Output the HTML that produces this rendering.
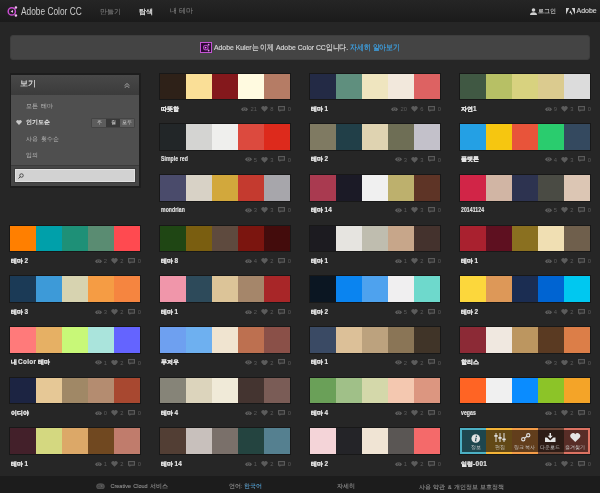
<!DOCTYPE html>
<html><head><meta charset="utf-8">
<style>
*{margin:0;padding:0;box-sizing:border-box}
.root{position:absolute;left:0;top:0;width:600px;height:493px;will-change:transform}
html,body{width:600px;height:493px;overflow:hidden;background:#262626;font-family:"Liberation Sans",sans-serif}
.hdr{position:absolute;left:0;top:0;width:600px;height:22px;background:linear-gradient(#252525,#1b1b1b)}
.logo{position:absolute;left:6px;top:5px}
.brand{position:absolute;left:21px;top:5.8px;font-size:10.3px;color:#cacaca;transform:scaleX(0.81);transform-origin:0 0;white-space:nowrap}
.nav{position:absolute;top:7px;font-size:7px;color:#8a8a8a;white-space:nowrap}
.banner{position:absolute;left:10px;top:34.5px;width:580px;height:25.5px;background:#444;border-radius:3px;border:1px solid #3d3d3d}
.bicon{position:absolute;left:200px;top:42px;width:12px;height:11px;background:#2c0a32;border:1px solid #c454d4}
.btext{position:absolute;left:214px;top:41.6px;font-size:8px;color:#d4d4d4;-webkit-text-stroke:0.2px #d4d4d4;white-space:nowrap;transform:scaleX(0.855);transform-origin:0 0}
.btext b{color:#3ea2e4;font-weight:normal;-webkit-text-stroke:0.2px #3ea2e4}
.side{position:absolute;left:9.5px;top:73px;width:131.5px;height:114.5px;background:#1d1d1d;border-radius:1px}
.side .in{position:absolute;left:1px;top:1.5px;width:128.5px;height:111px;background:#4f4f4f}
.shead{position:absolute;left:0;top:0;width:128.5px;height:20px;background:linear-gradient(#484848,#3b3b3b)}
.stitle{position:absolute;left:9.5px;top:3.8px;font-size:7.8px;color:#e8e8e8;-webkit-text-stroke:0.15px #e8e8e8}
.sitem{position:absolute;left:15px;font-size:6.4px;color:#bcbcbc;white-space:nowrap;word-spacing:0.5px;letter-spacing:0.25px}
.btns{position:absolute;left:81.5px;top:44px;width:42px;height:8.5px;display:flex;box-shadow:0 0 0 0.5px #3a3a3a}
.btns span{flex:1;background:#5c5c5c;font-size:4.5px;color:#d8d8d8;text-align:center;line-height:8.5px}
.btns span.on{background:#383838;color:#f4f4f4}
.sbot{position:absolute;left:0;top:90.5px;width:128.5px;height:20.5px;background:#464646;border-top:1px solid #3a3a3a}
.sinput{position:absolute;left:4px;top:3px;width:120.5px;height:12.5px;background:#d2d2d2;border:1px solid #e2e2e2;box-shadow:0 0 0 1px #3c3c3c}
.pal{position:absolute;width:130px;height:45px}
.sw{position:absolute;left:0;top:0;width:130px;height:25.7px;display:flex;box-shadow:0 0 0 1px rgba(0,0,0,0.35)}
.sw i{flex:1;display:block}
.sw{overflow:visible}
.tt.lat{transform:scaleX(0.8);transform-origin:0 0;word-spacing:0;letter-spacing:0.1px}
.ov{position:absolute;left:2px;top:2px;right:2px;bottom:2px;background:rgba(0,0,0,0.6)}
.hic{position:absolute}
.hl{position:absolute;top:16.5px;transform:translateX(-50%);font-size:4.5px;color:#cfcfcf;white-space:nowrap}
.tt{position:absolute;left:0.5px;top:31.3px;font-size:6.4px;letter-spacing:0.3px;word-spacing:-0.8px;font-weight:bold;color:#e4e4e4;-webkit-text-stroke:0.15px #e4e4e4;white-space:nowrap}
.meta{position:absolute;right:-1px;top:31.5px;height:8px;display:flex;align-items:center;font-size:5.8px;color:#5c5c5c}
.meta .n{margin-left:2px;margin-right:4.3px}
.meta .n:last-child{margin-right:0;margin-left:3px}
.ft{position:absolute;left:0;top:476px;width:600px;height:17px;background:#1c1c1c}
.ftx{position:absolute;top:482.5px;font-size:5.5px;color:#909090;-webkit-text-stroke:0.1px #909090;word-spacing:0.8px;white-space:nowrap}
</style></head><body><div class="root">
<div class="hdr"></div>
<svg class="logo" width="13" height="13" viewBox="0 0 13 13"><circle cx="5.8" cy="6.4" r="3.6" fill="none" stroke="#c84ad0" stroke-width="1.5"/><circle cx="9.9" cy="2.5" r="1.25" fill="#f0bcf0"/><circle cx="9.9" cy="10.6" r="1.25" fill="#f0bcf0"/><path d="M4.6 6.4 L7 5 V7.8Z" fill="#f0bcf0"/></svg>
<div class="brand">Adobe Color CC</div>
<div class="nav" style="left:100px">만들기</div>
<div class="nav" style="left:138.5px;color:#e6e6e6;font-weight:bold">탐색</div>
<div class="nav" style="left:170px;font-size:6.6px">내 테마</div>
<svg style="position:absolute;left:529.5px;top:8px" width="7" height="7" viewBox="0 0 14 14"><circle cx="7" cy="4" r="3.6" fill="#d0d0d0"/><path d="M0 14 Q0 8.5 7 8.5 Q14 8.5 14 14Z" fill="#d0d0d0"/></svg>
<div class="nav" style="left:538px;color:#c8c8c8;font-size:6.2px;letter-spacing:0.2px;-webkit-text-stroke:0.1px #c8c8c8">로그인</div>
<svg style="position:absolute;left:566px;top:8.3px" width="9" height="6.5" viewBox="0 0 18 13"><path d="M0 0H6.5L0 13Z M11.5 0H18V13Z M9 4.5L13 13H10.5L9.3 10H6.5Z" fill="#d0d0d0"/></svg>
<div class="nav" style="left:576.5px;color:#d4d4d4;font-size:7px;-webkit-text-stroke:0.15px #d4d4d4">Adobe</div>

<div class="banner"></div>
<div class="bicon"><svg style="position:absolute;left:0;top:0" width="10" height="9" viewBox="0 0 10 9"><circle cx="4.8" cy="4.6" r="2.3" fill="none" stroke="#b040c0" stroke-width="1.1"/><circle cx="7.6" cy="1.7" r="0.9" fill="#e0a0e8"/><circle cx="7.6" cy="7.5" r="0.9" fill="#e0a0e8"/><circle cx="4.6" cy="4.6" r="0.9" fill="#e0a0e8"/></svg></div>
<div class="btext">Adobe Kuler는 이제 Adobe Color CC입니다. <b>자세히 알아보기</b></div>

<div class="side"><div class="in">
<div class="shead"></div>
<div class="stitle">보기</div>
<svg style="position:absolute;left:113.5px;top:8px" width="6" height="5.5" viewBox="0 0 12 11"><path d="M1 5.5 L6 1 L11 5.5 M1 10 L6 5.5 L11 10" fill="none" stroke="#b8b8b8" stroke-width="1.6"/></svg>
<div class="sitem" style="top:27px">모든 테마</div>
<svg style="position:absolute;left:5.5px;top:45.5px" width="6" height="5" viewBox="0 0 14 12"><path d="M7 12 L1.2 6.2 A3.3 3.3 0 0 1 7 1.6 A3.3 3.3 0 0 1 12.8 6.2Z" fill="#c8c8c8"/></svg>
<div class="sitem" style="top:43.5px;color:#f0f0f0;font-weight:bold">인기도순</div>
<div class="btns"><span>주</span><span class="on">월</span><span>모두</span></div>
<div class="sitem" style="top:60px">사용 횟수순</div>
<div class="sitem" style="top:76px">임의</div>
<div class="sbot"><div class="sinput"><svg style="position:absolute;left:2px;top:3px" width="6" height="6" viewBox="0 0 12 12"><circle cx="7" cy="5" r="3.5" fill="none" stroke="#333" stroke-width="1.6"/><path d="M4.5 7.5 L1 11" stroke="#333" stroke-width="1.8"/></svg></div></div>
</div></div>

<div class="pal" style="left:160px;top:73.5px"><div class="sw"><i style="background:#2e2118"></i><i style="background:#fadf97"></i><i style="background:#84181c"></i><i style="background:#fffae0"></i><i style="background:#b57c65"></i></div><div class="tt">따뜻함</div><div class="meta"><svg class="ic eye" width="7" height="4.6" viewBox="0 0 14 9"><path d="M0 4.5 C3 -1.2 11 -1.2 14 4.5 C11 10.2 3 10.2 0 4.5Z" fill="#606060"/><circle cx="7" cy="4.5" r="2.4" fill="none" stroke="#2a2a2a" stroke-width="1.2"/></svg><span class="n">21</span><svg class="ic heart" width="7" height="5.8" viewBox="0 0 14 12"><path d="M7 12 L1.2 6.2 A3.3 3.3 0 0 1 7 1.6 A3.3 3.3 0 0 1 12.8 6.2Z" fill="#5c5c5c"/></svg><span class="n">8</span><svg class="ic cmt" width="7" height="6.5" viewBox="0 0 14 13"><path d="M0 0H14V9.5H5.5L3 12.5V9.5H0Z" fill="#5a5a5a"/><rect x="2.2" y="2.2" width="9.6" height="5" fill="#2e2e2e"/></svg><span class="n">0</span></div></div>
<div class="pal" style="left:310px;top:73.5px"><div class="sw"><i style="background:#232a45"></i><i style="background:#5f8f7e"></i><i style="background:#efe5bf"></i><i style="background:#f2e8dc"></i><i style="background:#dd6262"></i></div><div class="tt">테마 1</div><div class="meta"><svg class="ic eye" width="7" height="4.6" viewBox="0 0 14 9"><path d="M0 4.5 C3 -1.2 11 -1.2 14 4.5 C11 10.2 3 10.2 0 4.5Z" fill="#606060"/><circle cx="7" cy="4.5" r="2.4" fill="none" stroke="#2a2a2a" stroke-width="1.2"/></svg><span class="n">20</span><svg class="ic heart" width="7" height="5.8" viewBox="0 0 14 12"><path d="M7 12 L1.2 6.2 A3.3 3.3 0 0 1 7 1.6 A3.3 3.3 0 0 1 12.8 6.2Z" fill="#5c5c5c"/></svg><span class="n">6</span><svg class="ic cmt" width="7" height="6.5" viewBox="0 0 14 13"><path d="M0 0H14V9.5H5.5L3 12.5V9.5H0Z" fill="#5a5a5a"/><rect x="2.2" y="2.2" width="9.6" height="5" fill="#2e2e2e"/></svg><span class="n">0</span></div></div>
<div class="pal" style="left:460px;top:73.5px"><div class="sw"><i style="background:#405843"></i><i style="background:#b7c065"></i><i style="background:#d8d27f"></i><i style="background:#dbcb8f"></i><i style="background:#dcdcdc"></i></div><div class="tt">자연1</div><div class="meta"><svg class="ic eye" width="7" height="4.6" viewBox="0 0 14 9"><path d="M0 4.5 C3 -1.2 11 -1.2 14 4.5 C11 10.2 3 10.2 0 4.5Z" fill="#606060"/><circle cx="7" cy="4.5" r="2.4" fill="none" stroke="#2a2a2a" stroke-width="1.2"/></svg><span class="n">9</span><svg class="ic heart" width="7" height="5.8" viewBox="0 0 14 12"><path d="M7 12 L1.2 6.2 A3.3 3.3 0 0 1 7 1.6 A3.3 3.3 0 0 1 12.8 6.2Z" fill="#5c5c5c"/></svg><span class="n">3</span><svg class="ic cmt" width="7" height="6.5" viewBox="0 0 14 13"><path d="M0 0H14V9.5H5.5L3 12.5V9.5H0Z" fill="#5a5a5a"/><rect x="2.2" y="2.2" width="9.6" height="5" fill="#2e2e2e"/></svg><span class="n">0</span></div></div>
<div class="pal" style="left:160px;top:124.2px"><div class="sw"><i style="background:#222628"></i><i style="background:#d4d4d2"></i><i style="background:#efefed"></i><i style="background:#dc4a3e"></i><i style="background:#dd2a1c"></i></div><div class="tt lat">Simple red</div><div class="meta"><svg class="ic eye" width="7" height="4.6" viewBox="0 0 14 9"><path d="M0 4.5 C3 -1.2 11 -1.2 14 4.5 C11 10.2 3 10.2 0 4.5Z" fill="#606060"/><circle cx="7" cy="4.5" r="2.4" fill="none" stroke="#2a2a2a" stroke-width="1.2"/></svg><span class="n">5</span><svg class="ic heart" width="7" height="5.8" viewBox="0 0 14 12"><path d="M7 12 L1.2 6.2 A3.3 3.3 0 0 1 7 1.6 A3.3 3.3 0 0 1 12.8 6.2Z" fill="#5c5c5c"/></svg><span class="n">3</span><svg class="ic cmt" width="7" height="6.5" viewBox="0 0 14 13"><path d="M0 0H14V9.5H5.5L3 12.5V9.5H0Z" fill="#5a5a5a"/><rect x="2.2" y="2.2" width="9.6" height="5" fill="#2e2e2e"/></svg><span class="n">0</span></div></div>
<div class="pal" style="left:310px;top:124.2px"><div class="sw"><i style="background:#7f7a62"></i><i style="background:#213f48"></i><i style="background:#dfd3b1"></i><i style="background:#6e6e55"></i><i style="background:#c3c1ca"></i></div><div class="tt">테마 2</div><div class="meta"><svg class="ic eye" width="7" height="4.6" viewBox="0 0 14 9"><path d="M0 4.5 C3 -1.2 11 -1.2 14 4.5 C11 10.2 3 10.2 0 4.5Z" fill="#606060"/><circle cx="7" cy="4.5" r="2.4" fill="none" stroke="#2a2a2a" stroke-width="1.2"/></svg><span class="n">3</span><svg class="ic heart" width="7" height="5.8" viewBox="0 0 14 12"><path d="M7 12 L1.2 6.2 A3.3 3.3 0 0 1 7 1.6 A3.3 3.3 0 0 1 12.8 6.2Z" fill="#5c5c5c"/></svg><span class="n">3</span><svg class="ic cmt" width="7" height="6.5" viewBox="0 0 14 13"><path d="M0 0H14V9.5H5.5L3 12.5V9.5H0Z" fill="#5a5a5a"/><rect x="2.2" y="2.2" width="9.6" height="5" fill="#2e2e2e"/></svg><span class="n">0</span></div></div>
<div class="pal" style="left:460px;top:124.2px"><div class="sw"><i style="background:#24a0e4"></i><i style="background:#f6c610"></i><i style="background:#e8543a"></i><i style="background:#2acc6e"></i><i style="background:#34495f"></i></div><div class="tt">플랫톤</div><div class="meta"><svg class="ic eye" width="7" height="4.6" viewBox="0 0 14 9"><path d="M0 4.5 C3 -1.2 11 -1.2 14 4.5 C11 10.2 3 10.2 0 4.5Z" fill="#606060"/><circle cx="7" cy="4.5" r="2.4" fill="none" stroke="#2a2a2a" stroke-width="1.2"/></svg><span class="n">4</span><svg class="ic heart" width="7" height="5.8" viewBox="0 0 14 12"><path d="M7 12 L1.2 6.2 A3.3 3.3 0 0 1 7 1.6 A3.3 3.3 0 0 1 12.8 6.2Z" fill="#5c5c5c"/></svg><span class="n">3</span><svg class="ic cmt" width="7" height="6.5" viewBox="0 0 14 13"><path d="M0 0H14V9.5H5.5L3 12.5V9.5H0Z" fill="#5a5a5a"/><rect x="2.2" y="2.2" width="9.6" height="5" fill="#2e2e2e"/></svg><span class="n">0</span></div></div>
<div class="pal" style="left:160px;top:174.9px"><div class="sw"><i style="background:#4a4b6b"></i><i style="background:#d8d2c6"></i><i style="background:#d2a83c"></i><i style="background:#c43a2f"></i><i style="background:#a7a6ab"></i></div><div class="tt lat">mondrian</div><div class="meta"><svg class="ic eye" width="7" height="4.6" viewBox="0 0 14 9"><path d="M0 4.5 C3 -1.2 11 -1.2 14 4.5 C11 10.2 3 10.2 0 4.5Z" fill="#606060"/><circle cx="7" cy="4.5" r="2.4" fill="none" stroke="#2a2a2a" stroke-width="1.2"/></svg><span class="n">3</span><svg class="ic heart" width="7" height="5.8" viewBox="0 0 14 12"><path d="M7 12 L1.2 6.2 A3.3 3.3 0 0 1 7 1.6 A3.3 3.3 0 0 1 12.8 6.2Z" fill="#5c5c5c"/></svg><span class="n">3</span><svg class="ic cmt" width="7" height="6.5" viewBox="0 0 14 13"><path d="M0 0H14V9.5H5.5L3 12.5V9.5H0Z" fill="#5a5a5a"/><rect x="2.2" y="2.2" width="9.6" height="5" fill="#2e2e2e"/></svg><span class="n">0</span></div></div>
<div class="pal" style="left:310px;top:174.9px"><div class="sw"><i style="background:#a93a50"></i><i style="background:#1b1a26"></i><i style="background:#f0f0f0"></i><i style="background:#bdb06d"></i><i style="background:#5e3426"></i></div><div class="tt">테마 14</div><div class="meta"><svg class="ic eye" width="7" height="4.6" viewBox="0 0 14 9"><path d="M0 4.5 C3 -1.2 11 -1.2 14 4.5 C11 10.2 3 10.2 0 4.5Z" fill="#606060"/><circle cx="7" cy="4.5" r="2.4" fill="none" stroke="#2a2a2a" stroke-width="1.2"/></svg><span class="n">1</span><svg class="ic heart" width="7" height="5.8" viewBox="0 0 14 12"><path d="M7 12 L1.2 6.2 A3.3 3.3 0 0 1 7 1.6 A3.3 3.3 0 0 1 12.8 6.2Z" fill="#5c5c5c"/></svg><span class="n">3</span><svg class="ic cmt" width="7" height="6.5" viewBox="0 0 14 13"><path d="M0 0H14V9.5H5.5L3 12.5V9.5H0Z" fill="#5a5a5a"/><rect x="2.2" y="2.2" width="9.6" height="5" fill="#2e2e2e"/></svg><span class="n">0</span></div></div>
<div class="pal" style="left:460px;top:174.9px"><div class="sw"><i style="background:#d12547"></i><i style="background:#d1b5a4"></i><i style="background:#2d3350"></i><i style="background:#4a4b44"></i><i style="background:#dcc6b4"></i></div><div class="tt lat">20141124</div><div class="meta"><svg class="ic eye" width="7" height="4.6" viewBox="0 0 14 9"><path d="M0 4.5 C3 -1.2 11 -1.2 14 4.5 C11 10.2 3 10.2 0 4.5Z" fill="#606060"/><circle cx="7" cy="4.5" r="2.4" fill="none" stroke="#2a2a2a" stroke-width="1.2"/></svg><span class="n">5</span><svg class="ic heart" width="7" height="5.8" viewBox="0 0 14 12"><path d="M7 12 L1.2 6.2 A3.3 3.3 0 0 1 7 1.6 A3.3 3.3 0 0 1 12.8 6.2Z" fill="#5c5c5c"/></svg><span class="n">2</span><svg class="ic cmt" width="7" height="6.5" viewBox="0 0 14 13"><path d="M0 0H14V9.5H5.5L3 12.5V9.5H0Z" fill="#5a5a5a"/><rect x="2.2" y="2.2" width="9.6" height="5" fill="#2e2e2e"/></svg><span class="n">0</span></div></div>
<div class="pal" style="left:10px;top:225.6px"><div class="sw"><i style="background:#ff7f00"></i><i style="background:#00a0aa"></i><i style="background:#1e9077"></i><i style="background:#5a8c72"></i><i style="background:#ff4a50"></i></div><div class="tt">테마 2</div><div class="meta"><svg class="ic eye" width="7" height="4.6" viewBox="0 0 14 9"><path d="M0 4.5 C3 -1.2 11 -1.2 14 4.5 C11 10.2 3 10.2 0 4.5Z" fill="#606060"/><circle cx="7" cy="4.5" r="2.4" fill="none" stroke="#2a2a2a" stroke-width="1.2"/></svg><span class="n">2</span><svg class="ic heart" width="7" height="5.8" viewBox="0 0 14 12"><path d="M7 12 L1.2 6.2 A3.3 3.3 0 0 1 7 1.6 A3.3 3.3 0 0 1 12.8 6.2Z" fill="#5c5c5c"/></svg><span class="n">2</span><svg class="ic cmt" width="7" height="6.5" viewBox="0 0 14 13"><path d="M0 0H14V9.5H5.5L3 12.5V9.5H0Z" fill="#5a5a5a"/><rect x="2.2" y="2.2" width="9.6" height="5" fill="#2e2e2e"/></svg><span class="n">0</span></div></div>
<div class="pal" style="left:160px;top:225.6px"><div class="sw"><i style="background:#1f4614"></i><i style="background:#7a5e10"></i><i style="background:#5e4a3e"></i><i style="background:#7b150f"></i><i style="background:#430c0c"></i></div><div class="tt">테마 8</div><div class="meta"><svg class="ic eye" width="7" height="4.6" viewBox="0 0 14 9"><path d="M0 4.5 C3 -1.2 11 -1.2 14 4.5 C11 10.2 3 10.2 0 4.5Z" fill="#606060"/><circle cx="7" cy="4.5" r="2.4" fill="none" stroke="#2a2a2a" stroke-width="1.2"/></svg><span class="n">4</span><svg class="ic heart" width="7" height="5.8" viewBox="0 0 14 12"><path d="M7 12 L1.2 6.2 A3.3 3.3 0 0 1 7 1.6 A3.3 3.3 0 0 1 12.8 6.2Z" fill="#5c5c5c"/></svg><span class="n">2</span><svg class="ic cmt" width="7" height="6.5" viewBox="0 0 14 13"><path d="M0 0H14V9.5H5.5L3 12.5V9.5H0Z" fill="#5a5a5a"/><rect x="2.2" y="2.2" width="9.6" height="5" fill="#2e2e2e"/></svg><span class="n">0</span></div></div>
<div class="pal" style="left:310px;top:225.6px"><div class="sw"><i style="background:#1c1b20"></i><i style="background:#e6e4e0"></i><i style="background:#bfbdaf"></i><i style="background:#c7a68a"></i><i style="background:#44322d"></i></div><div class="tt">테마 1</div><div class="meta"><svg class="ic eye" width="7" height="4.6" viewBox="0 0 14 9"><path d="M0 4.5 C3 -1.2 11 -1.2 14 4.5 C11 10.2 3 10.2 0 4.5Z" fill="#606060"/><circle cx="7" cy="4.5" r="2.4" fill="none" stroke="#2a2a2a" stroke-width="1.2"/></svg><span class="n">1</span><svg class="ic heart" width="7" height="5.8" viewBox="0 0 14 12"><path d="M7 12 L1.2 6.2 A3.3 3.3 0 0 1 7 1.6 A3.3 3.3 0 0 1 12.8 6.2Z" fill="#5c5c5c"/></svg><span class="n">2</span><svg class="ic cmt" width="7" height="6.5" viewBox="0 0 14 13"><path d="M0 0H14V9.5H5.5L3 12.5V9.5H0Z" fill="#5a5a5a"/><rect x="2.2" y="2.2" width="9.6" height="5" fill="#2e2e2e"/></svg><span class="n">0</span></div></div>
<div class="pal" style="left:460px;top:225.6px"><div class="sw"><i style="background:#a9212f"></i><i style="background:#5e1020"></i><i style="background:#8a7020"></i><i style="background:#f0dfb3"></i><i style="background:#6f5f4c"></i></div><div class="tt">테마 1</div><div class="meta"><svg class="ic eye" width="7" height="4.6" viewBox="0 0 14 9"><path d="M0 4.5 C3 -1.2 11 -1.2 14 4.5 C11 10.2 3 10.2 0 4.5Z" fill="#606060"/><circle cx="7" cy="4.5" r="2.4" fill="none" stroke="#2a2a2a" stroke-width="1.2"/></svg><span class="n">0</span><svg class="ic heart" width="7" height="5.8" viewBox="0 0 14 12"><path d="M7 12 L1.2 6.2 A3.3 3.3 0 0 1 7 1.6 A3.3 3.3 0 0 1 12.8 6.2Z" fill="#5c5c5c"/></svg><span class="n">2</span><svg class="ic cmt" width="7" height="6.5" viewBox="0 0 14 13"><path d="M0 0H14V9.5H5.5L3 12.5V9.5H0Z" fill="#5a5a5a"/><rect x="2.2" y="2.2" width="9.6" height="5" fill="#2e2e2e"/></svg><span class="n">0</span></div></div>
<div class="pal" style="left:10px;top:276.3px"><div class="sw"><i style="background:#1b3a56"></i><i style="background:#3d9ad8"></i><i style="background:#d7d3b0"></i><i style="background:#f59c44"></i><i style="background:#f58540"></i></div><div class="tt">테마 3</div><div class="meta"><svg class="ic eye" width="7" height="4.6" viewBox="0 0 14 9"><path d="M0 4.5 C3 -1.2 11 -1.2 14 4.5 C11 10.2 3 10.2 0 4.5Z" fill="#606060"/><circle cx="7" cy="4.5" r="2.4" fill="none" stroke="#2a2a2a" stroke-width="1.2"/></svg><span class="n">3</span><svg class="ic heart" width="7" height="5.8" viewBox="0 0 14 12"><path d="M7 12 L1.2 6.2 A3.3 3.3 0 0 1 7 1.6 A3.3 3.3 0 0 1 12.8 6.2Z" fill="#5c5c5c"/></svg><span class="n">2</span><svg class="ic cmt" width="7" height="6.5" viewBox="0 0 14 13"><path d="M0 0H14V9.5H5.5L3 12.5V9.5H0Z" fill="#5a5a5a"/><rect x="2.2" y="2.2" width="9.6" height="5" fill="#2e2e2e"/></svg><span class="n">0</span></div></div>
<div class="pal" style="left:160px;top:276.3px"><div class="sw"><i style="background:#f096aa"></i><i style="background:#2d4a5a"></i><i style="background:#dcc498"></i><i style="background:#a5866a"></i><i style="background:#a82628"></i></div><div class="tt">테마 1</div><div class="meta"><svg class="ic eye" width="7" height="4.6" viewBox="0 0 14 9"><path d="M0 4.5 C3 -1.2 11 -1.2 14 4.5 C11 10.2 3 10.2 0 4.5Z" fill="#606060"/><circle cx="7" cy="4.5" r="2.4" fill="none" stroke="#2a2a2a" stroke-width="1.2"/></svg><span class="n">2</span><svg class="ic heart" width="7" height="5.8" viewBox="0 0 14 12"><path d="M7 12 L1.2 6.2 A3.3 3.3 0 0 1 7 1.6 A3.3 3.3 0 0 1 12.8 6.2Z" fill="#5c5c5c"/></svg><span class="n">2</span><svg class="ic cmt" width="7" height="6.5" viewBox="0 0 14 13"><path d="M0 0H14V9.5H5.5L3 12.5V9.5H0Z" fill="#5a5a5a"/><rect x="2.2" y="2.2" width="9.6" height="5" fill="#2e2e2e"/></svg><span class="n">0</span></div></div>
<div class="pal" style="left:310px;top:276.3px"><div class="sw"><i style="background:#0b1622"></i><i style="background:#0a84f0"></i><i style="background:#4ea2ee"></i><i style="background:#f0eff0"></i><i style="background:#6ed9cc"></i></div><div class="tt">테마 2</div><div class="meta"><svg class="ic eye" width="7" height="4.6" viewBox="0 0 14 9"><path d="M0 4.5 C3 -1.2 11 -1.2 14 4.5 C11 10.2 3 10.2 0 4.5Z" fill="#606060"/><circle cx="7" cy="4.5" r="2.4" fill="none" stroke="#2a2a2a" stroke-width="1.2"/></svg><span class="n">5</span><svg class="ic heart" width="7" height="5.8" viewBox="0 0 14 12"><path d="M7 12 L1.2 6.2 A3.3 3.3 0 0 1 7 1.6 A3.3 3.3 0 0 1 12.8 6.2Z" fill="#5c5c5c"/></svg><span class="n">2</span><svg class="ic cmt" width="7" height="6.5" viewBox="0 0 14 13"><path d="M0 0H14V9.5H5.5L3 12.5V9.5H0Z" fill="#5a5a5a"/><rect x="2.2" y="2.2" width="9.6" height="5" fill="#2e2e2e"/></svg><span class="n">0</span></div></div>
<div class="pal" style="left:460px;top:276.3px"><div class="sw"><i style="background:#fcd73c"></i><i style="background:#dd9858"></i><i style="background:#1b2d52"></i><i style="background:#0064d2"></i><i style="background:#00c8f0"></i></div><div class="tt">테마 2</div><div class="meta"><svg class="ic eye" width="7" height="4.6" viewBox="0 0 14 9"><path d="M0 4.5 C3 -1.2 11 -1.2 14 4.5 C11 10.2 3 10.2 0 4.5Z" fill="#606060"/><circle cx="7" cy="4.5" r="2.4" fill="none" stroke="#2a2a2a" stroke-width="1.2"/></svg><span class="n">4</span><svg class="ic heart" width="7" height="5.8" viewBox="0 0 14 12"><path d="M7 12 L1.2 6.2 A3.3 3.3 0 0 1 7 1.6 A3.3 3.3 0 0 1 12.8 6.2Z" fill="#5c5c5c"/></svg><span class="n">2</span><svg class="ic cmt" width="7" height="6.5" viewBox="0 0 14 13"><path d="M0 0H14V9.5H5.5L3 12.5V9.5H0Z" fill="#5a5a5a"/><rect x="2.2" y="2.2" width="9.6" height="5" fill="#2e2e2e"/></svg><span class="n">0</span></div></div>
<div class="pal" style="left:10px;top:327.0px"><div class="sw"><i style="background:#ff7a7a"></i><i style="background:#e6b064"></i><i style="background:#c8f878"></i><i style="background:#aae4dc"></i><i style="background:#6464ff"></i></div><div class="tt">내 Color 테마</div><div class="meta"><svg class="ic eye" width="7" height="4.6" viewBox="0 0 14 9"><path d="M0 4.5 C3 -1.2 11 -1.2 14 4.5 C11 10.2 3 10.2 0 4.5Z" fill="#606060"/><circle cx="7" cy="4.5" r="2.4" fill="none" stroke="#2a2a2a" stroke-width="1.2"/></svg><span class="n">1</span><svg class="ic heart" width="7" height="5.8" viewBox="0 0 14 12"><path d="M7 12 L1.2 6.2 A3.3 3.3 0 0 1 7 1.6 A3.3 3.3 0 0 1 12.8 6.2Z" fill="#5c5c5c"/></svg><span class="n">2</span><svg class="ic cmt" width="7" height="6.5" viewBox="0 0 14 13"><path d="M0 0H14V9.5H5.5L3 12.5V9.5H0Z" fill="#5a5a5a"/><rect x="2.2" y="2.2" width="9.6" height="5" fill="#2e2e2e"/></svg><span class="n">0</span></div></div>
<div class="pal" style="left:160px;top:327.0px"><div class="sw"><i style="background:#6ea0f0"></i><i style="background:#6eb0f0"></i><i style="background:#f0e4d0"></i><i style="background:#bd7050"></i><i style="background:#8a5048"></i></div><div class="tt">푸저우</div><div class="meta"><svg class="ic eye" width="7" height="4.6" viewBox="0 0 14 9"><path d="M0 4.5 C3 -1.2 11 -1.2 14 4.5 C11 10.2 3 10.2 0 4.5Z" fill="#606060"/><circle cx="7" cy="4.5" r="2.4" fill="none" stroke="#2a2a2a" stroke-width="1.2"/></svg><span class="n">3</span><svg class="ic heart" width="7" height="5.8" viewBox="0 0 14 12"><path d="M7 12 L1.2 6.2 A3.3 3.3 0 0 1 7 1.6 A3.3 3.3 0 0 1 12.8 6.2Z" fill="#5c5c5c"/></svg><span class="n">2</span><svg class="ic cmt" width="7" height="6.5" viewBox="0 0 14 13"><path d="M0 0H14V9.5H5.5L3 12.5V9.5H0Z" fill="#5a5a5a"/><rect x="2.2" y="2.2" width="9.6" height="5" fill="#2e2e2e"/></svg><span class="n">0</span></div></div>
<div class="pal" style="left:310px;top:327.0px"><div class="sw"><i style="background:#3a4a64"></i><i style="background:#dcc098"></i><i style="background:#bca27e"></i><i style="background:#8a7556"></i><i style="background:#403428"></i></div><div class="tt">테마 1</div><div class="meta"><svg class="ic eye" width="7" height="4.6" viewBox="0 0 14 9"><path d="M0 4.5 C3 -1.2 11 -1.2 14 4.5 C11 10.2 3 10.2 0 4.5Z" fill="#606060"/><circle cx="7" cy="4.5" r="2.4" fill="none" stroke="#2a2a2a" stroke-width="1.2"/></svg><span class="n">2</span><svg class="ic heart" width="7" height="5.8" viewBox="0 0 14 12"><path d="M7 12 L1.2 6.2 A3.3 3.3 0 0 1 7 1.6 A3.3 3.3 0 0 1 12.8 6.2Z" fill="#5c5c5c"/></svg><span class="n">2</span><svg class="ic cmt" width="7" height="6.5" viewBox="0 0 14 13"><path d="M0 0H14V9.5H5.5L3 12.5V9.5H0Z" fill="#5a5a5a"/><rect x="2.2" y="2.2" width="9.6" height="5" fill="#2e2e2e"/></svg><span class="n">0</span></div></div>
<div class="pal" style="left:460px;top:327.0px"><div class="sw"><i style="background:#8c2a36"></i><i style="background:#f0e8e0"></i><i style="background:#bc9660"></i><i style="background:#5a3a22"></i><i style="background:#dc7e48"></i></div><div class="tt">할리스</div><div class="meta"><svg class="ic eye" width="7" height="4.6" viewBox="0 0 14 9"><path d="M0 4.5 C3 -1.2 11 -1.2 14 4.5 C11 10.2 3 10.2 0 4.5Z" fill="#606060"/><circle cx="7" cy="4.5" r="2.4" fill="none" stroke="#2a2a2a" stroke-width="1.2"/></svg><span class="n">3</span><svg class="ic heart" width="7" height="5.8" viewBox="0 0 14 12"><path d="M7 12 L1.2 6.2 A3.3 3.3 0 0 1 7 1.6 A3.3 3.3 0 0 1 12.8 6.2Z" fill="#5c5c5c"/></svg><span class="n">2</span><svg class="ic cmt" width="7" height="6.5" viewBox="0 0 14 13"><path d="M0 0H14V9.5H5.5L3 12.5V9.5H0Z" fill="#5a5a5a"/><rect x="2.2" y="2.2" width="9.6" height="5" fill="#2e2e2e"/></svg><span class="n">0</span></div></div>
<div class="pal" style="left:10px;top:377.7px"><div class="sw"><i style="background:#1c2442"></i><i style="background:#e6c896"></i><i style="background:#a08866"></i><i style="background:#b48c70"></i><i style="background:#a84830"></i></div><div class="tt">이디야</div><div class="meta"><svg class="ic eye" width="7" height="4.6" viewBox="0 0 14 9"><path d="M0 4.5 C3 -1.2 11 -1.2 14 4.5 C11 10.2 3 10.2 0 4.5Z" fill="#606060"/><circle cx="7" cy="4.5" r="2.4" fill="none" stroke="#2a2a2a" stroke-width="1.2"/></svg><span class="n">0</span><svg class="ic heart" width="7" height="5.8" viewBox="0 0 14 12"><path d="M7 12 L1.2 6.2 A3.3 3.3 0 0 1 7 1.6 A3.3 3.3 0 0 1 12.8 6.2Z" fill="#5c5c5c"/></svg><span class="n">2</span><svg class="ic cmt" width="7" height="6.5" viewBox="0 0 14 13"><path d="M0 0H14V9.5H5.5L3 12.5V9.5H0Z" fill="#5a5a5a"/><rect x="2.2" y="2.2" width="9.6" height="5" fill="#2e2e2e"/></svg><span class="n">0</span></div></div>
<div class="pal" style="left:160px;top:377.7px"><div class="sw"><i style="background:#868478"></i><i style="background:#dcd4bc"></i><i style="background:#f0ead8"></i><i style="background:#443430"></i><i style="background:#7a5c56"></i></div><div class="tt">테마 4</div><div class="meta"><svg class="ic eye" width="7" height="4.6" viewBox="0 0 14 9"><path d="M0 4.5 C3 -1.2 11 -1.2 14 4.5 C11 10.2 3 10.2 0 4.5Z" fill="#606060"/><circle cx="7" cy="4.5" r="2.4" fill="none" stroke="#2a2a2a" stroke-width="1.2"/></svg><span class="n">2</span><svg class="ic heart" width="7" height="5.8" viewBox="0 0 14 12"><path d="M7 12 L1.2 6.2 A3.3 3.3 0 0 1 7 1.6 A3.3 3.3 0 0 1 12.8 6.2Z" fill="#5c5c5c"/></svg><span class="n">2</span><svg class="ic cmt" width="7" height="6.5" viewBox="0 0 14 13"><path d="M0 0H14V9.5H5.5L3 12.5V9.5H0Z" fill="#5a5a5a"/><rect x="2.2" y="2.2" width="9.6" height="5" fill="#2e2e2e"/></svg><span class="n">0</span></div></div>
<div class="pal" style="left:310px;top:377.7px"><div class="sw"><i style="background:#6aa058"></i><i style="background:#a0c088"></i><i style="background:#d4d8aa"></i><i style="background:#f4c8b0"></i><i style="background:#dc9680"></i></div><div class="tt">테마 4</div><div class="meta"><svg class="ic eye" width="7" height="4.6" viewBox="0 0 14 9"><path d="M0 4.5 C3 -1.2 11 -1.2 14 4.5 C11 10.2 3 10.2 0 4.5Z" fill="#606060"/><circle cx="7" cy="4.5" r="2.4" fill="none" stroke="#2a2a2a" stroke-width="1.2"/></svg><span class="n">3</span><svg class="ic heart" width="7" height="5.8" viewBox="0 0 14 12"><path d="M7 12 L1.2 6.2 A3.3 3.3 0 0 1 7 1.6 A3.3 3.3 0 0 1 12.8 6.2Z" fill="#5c5c5c"/></svg><span class="n">2</span><svg class="ic cmt" width="7" height="6.5" viewBox="0 0 14 13"><path d="M0 0H14V9.5H5.5L3 12.5V9.5H0Z" fill="#5a5a5a"/><rect x="2.2" y="2.2" width="9.6" height="5" fill="#2e2e2e"/></svg><span class="n">0</span></div></div>
<div class="pal" style="left:460px;top:377.7px"><div class="sw"><i style="background:#ff6424"></i><i style="background:#f0f0f0"></i><i style="background:#0a8cff"></i><i style="background:#8cc428"></i><i style="background:#f4a428"></i></div><div class="tt lat">vegas</div><div class="meta"><svg class="ic eye" width="7" height="4.6" viewBox="0 0 14 9"><path d="M0 4.5 C3 -1.2 11 -1.2 14 4.5 C11 10.2 3 10.2 0 4.5Z" fill="#606060"/><circle cx="7" cy="4.5" r="2.4" fill="none" stroke="#2a2a2a" stroke-width="1.2"/></svg><span class="n">1</span><svg class="ic heart" width="7" height="5.8" viewBox="0 0 14 12"><path d="M7 12 L1.2 6.2 A3.3 3.3 0 0 1 7 1.6 A3.3 3.3 0 0 1 12.8 6.2Z" fill="#5c5c5c"/></svg><span class="n">2</span><svg class="ic cmt" width="7" height="6.5" viewBox="0 0 14 13"><path d="M0 0H14V9.5H5.5L3 12.5V9.5H0Z" fill="#5a5a5a"/><rect x="2.2" y="2.2" width="9.6" height="5" fill="#2e2e2e"/></svg><span class="n">0</span></div></div>
<div class="pal" style="left:10px;top:428.4px"><div class="sw"><i style="background:#43202a"></i><i style="background:#d4d880"></i><i style="background:#dca868"></i><i style="background:#704820"></i><i style="background:#c07c6c"></i></div><div class="tt">테마 1</div><div class="meta"><svg class="ic eye" width="7" height="4.6" viewBox="0 0 14 9"><path d="M0 4.5 C3 -1.2 11 -1.2 14 4.5 C11 10.2 3 10.2 0 4.5Z" fill="#606060"/><circle cx="7" cy="4.5" r="2.4" fill="none" stroke="#2a2a2a" stroke-width="1.2"/></svg><span class="n">1</span><svg class="ic heart" width="7" height="5.8" viewBox="0 0 14 12"><path d="M7 12 L1.2 6.2 A3.3 3.3 0 0 1 7 1.6 A3.3 3.3 0 0 1 12.8 6.2Z" fill="#5c5c5c"/></svg><span class="n">2</span><svg class="ic cmt" width="7" height="6.5" viewBox="0 0 14 13"><path d="M0 0H14V9.5H5.5L3 12.5V9.5H0Z" fill="#5a5a5a"/><rect x="2.2" y="2.2" width="9.6" height="5" fill="#2e2e2e"/></svg><span class="n">0</span></div></div>
<div class="pal" style="left:160px;top:428.4px"><div class="sw"><i style="background:#523e34"></i><i style="background:#c8c0bc"></i><i style="background:#7a706a"></i><i style="background:#244440"></i><i style="background:#558090"></i></div><div class="tt">테마 14</div><div class="meta"><svg class="ic eye" width="7" height="4.6" viewBox="0 0 14 9"><path d="M0 4.5 C3 -1.2 11 -1.2 14 4.5 C11 10.2 3 10.2 0 4.5Z" fill="#606060"/><circle cx="7" cy="4.5" r="2.4" fill="none" stroke="#2a2a2a" stroke-width="1.2"/></svg><span class="n">1</span><svg class="ic heart" width="7" height="5.8" viewBox="0 0 14 12"><path d="M7 12 L1.2 6.2 A3.3 3.3 0 0 1 7 1.6 A3.3 3.3 0 0 1 12.8 6.2Z" fill="#5c5c5c"/></svg><span class="n">2</span><svg class="ic cmt" width="7" height="6.5" viewBox="0 0 14 13"><path d="M0 0H14V9.5H5.5L3 12.5V9.5H0Z" fill="#5a5a5a"/><rect x="2.2" y="2.2" width="9.6" height="5" fill="#2e2e2e"/></svg><span class="n">0</span></div></div>
<div class="pal" style="left:310px;top:428.4px"><div class="sw"><i style="background:#f4d4d8"></i><i style="background:#242428"></i><i style="background:#f0e4d4"></i><i style="background:#5a5654"></i><i style="background:#f46a6a"></i></div><div class="tt">테마 2</div><div class="meta"><svg class="ic eye" width="7" height="4.6" viewBox="0 0 14 9"><path d="M0 4.5 C3 -1.2 11 -1.2 14 4.5 C11 10.2 3 10.2 0 4.5Z" fill="#606060"/><circle cx="7" cy="4.5" r="2.4" fill="none" stroke="#2a2a2a" stroke-width="1.2"/></svg><span class="n">1</span><svg class="ic heart" width="7" height="5.8" viewBox="0 0 14 12"><path d="M7 12 L1.2 6.2 A3.3 3.3 0 0 1 7 1.6 A3.3 3.3 0 0 1 12.8 6.2Z" fill="#5c5c5c"/></svg><span class="n">2</span><svg class="ic cmt" width="7" height="6.5" viewBox="0 0 14 13"><path d="M0 0H14V9.5H5.5L3 12.5V9.5H0Z" fill="#5a5a5a"/><rect x="2.2" y="2.2" width="9.6" height="5" fill="#2e2e2e"/></svg><span class="n">0</span></div></div>
<div class="pal" style="left:460px;top:428.4px"><div class="sw"><i style="background:#4cb0c4"></i><i style="background:#f4b438"></i><i style="background:#f49c48"></i><i style="background:#704838"></i><i style="background:#dc7262"></i><div class="ov"></div>
<svg class="hic" style="left:11px;top:6px" width="9.5" height="9" viewBox="0 0 19 18"><circle cx="9.5" cy="9" r="8.6" fill="#e4e4e4"/><circle cx="10.8" cy="4.6" r="1.5" fill="#1e4450"/><path d="M8.2 7.5 H11.6 L10 13.6 H11.6 L11.3 14.4 H7.6 L9.2 8.3 H8Z" fill="#1e4450"/></svg>
<svg class="hic" style="left:34px;top:5px" width="12" height="9" viewBox="0 0 24 18"><g fill="#e0e0e0"><rect x="3" y="0" width="2" height="18"/><rect x="11" y="0" width="2" height="18"/><rect x="19" y="0" width="2" height="18"/><rect x="0.5" y="4" width="7" height="3.5" rx="1"/><rect x="8.5" y="8" width="7" height="3.5" rx="1"/><rect x="16.5" y="11" width="7" height="3.5" rx="1"/></g></svg>
<svg class="hic" style="left:61px;top:4.8px" width="9.5" height="8.5" viewBox="0 0 19 17"><g fill="none" stroke="#e0e0e0" stroke-width="2.2"><circle cx="4.5" cy="12.5" r="3.3"/><circle cx="14.5" cy="4.5" r="3.3"/><path d="M7 10.5 L12 6.5"/></g></svg>
<svg class="hic" style="left:85px;top:4.3px" width="10.5" height="9.5" viewBox="0 0 21 19"><g fill="#e6e6e6"><rect x="9" y="0" width="3" height="7"/><path d="M5.5 5.5 H15.5 L10.5 11Z"/><path d="M0 9 H4 L10.5 15 L17 9 H21 V19 H0Z"/></g></svg>
<svg class="hic" style="left:110px;top:4.6px" width="10.5" height="9" viewBox="0 0 14 12"><path d="M7 12 L1.2 6.2 A3.3 3.3 0 0 1 7 1.6 A3.3 3.3 0 0 1 12.8 6.2Z" fill="#e4e4e4"/></svg>
<div class="hl" style="left:15.5px">정보</div>
<div class="hl" style="left:40px">편집</div>
<div class="hl" style="left:64.8px">링크 복사</div>
<div class="hl" style="left:90px">다운로드</div>
<div class="hl" style="left:115px">즐겨찾기</div></div><div class="tt">일렁-001</div><div class="meta"><svg class="ic eye" width="7" height="4.6" viewBox="0 0 14 9"><path d="M0 4.5 C3 -1.2 11 -1.2 14 4.5 C11 10.2 3 10.2 0 4.5Z" fill="#606060"/><circle cx="7" cy="4.5" r="2.4" fill="none" stroke="#2a2a2a" stroke-width="1.2"/></svg><span class="n">1</span><svg class="ic heart" width="7" height="5.8" viewBox="0 0 14 12"><path d="M7 12 L1.2 6.2 A3.3 3.3 0 0 1 7 1.6 A3.3 3.3 0 0 1 12.8 6.2Z" fill="#5c5c5c"/></svg><span class="n">2</span><svg class="ic cmt" width="7" height="6.5" viewBox="0 0 14 13"><path d="M0 0H14V9.5H5.5L3 12.5V9.5H0Z" fill="#5a5a5a"/><rect x="2.2" y="2.2" width="9.6" height="5" fill="#2e2e2e"/></svg><span class="n">0</span></div></div>

<div class="ft"></div>
<svg style="position:absolute;left:96px;top:482.5px" width="9" height="6.6" viewBox="0 0 18 13"><ellipse cx="9" cy="6.8" rx="8.6" ry="6.2" fill="#505050"/><ellipse cx="6" cy="7" rx="2.6" ry="2.3" fill="none" stroke="#3a3a3a" stroke-width="1.2"/><ellipse cx="11.5" cy="7" rx="2.6" ry="2.3" fill="none" stroke="#3a3a3a" stroke-width="1.2"/><circle cx="11" cy="6" r="1.6" fill="#6a6a6a"/></svg>
<div class="ftx" style="left:110.5px">Creative Cloud 서비스</div>
<div class="ftx" style="left:228.5px">언어: <span style="color:#3ea2e4">한국어</span></div>
<div class="ftx" style="left:336.5px">자세히</div>
<div class="ftx" style="left:419px;font-size:5.75px">사용 약관 &amp; 개인정보 보호정책</div>
</div></body></html>
